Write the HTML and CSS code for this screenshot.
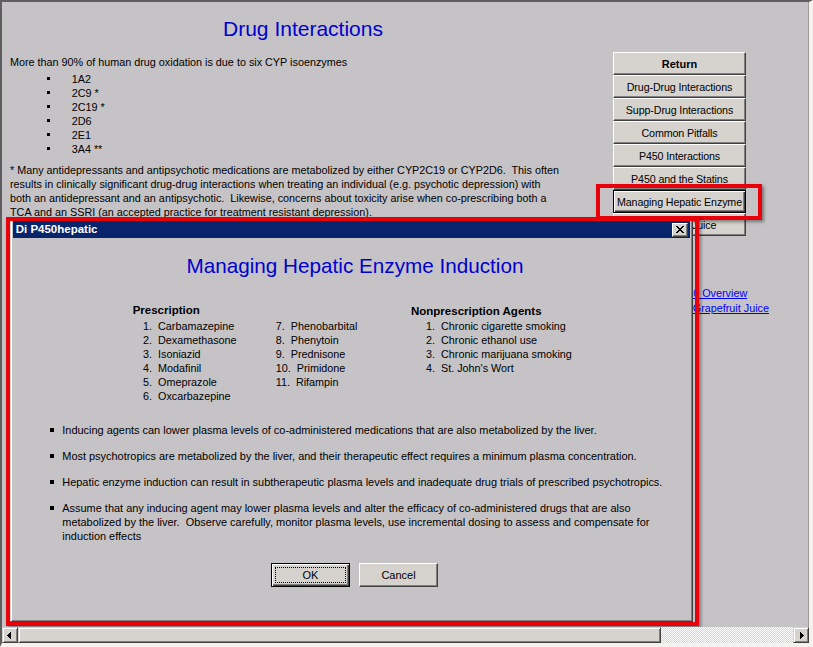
FILE: index.html
```html
<!DOCTYPE html>
<html lang="en">
<head>
<meta charset="utf-8">
<title>Drug Interactions</title>
<link rel="stylesheet" href="styles.css">
</head>
<body>
<div class="frame">
  <div class="view">
    <div class="page">
      <div class="main">
        <h1 class="title">Drug Interactions</h1>
        <p class="lead">More than 90% of human drug oxidation is due to six CYP isoenzymes</p>
        <ul class="cyp">
          <li>1A2</li>
          <li>2C9 *</li>
          <li>2C19 *</li>
          <li>2D6</li>
          <li>2E1</li>
          <li>3A4 **</li>
        </ul>
        <p class="note">* Many antidepressants and antipsychotic medications are metabolized by either CYP2C19 or CYP2D6.&nbsp; This often<br>results in clinically significant drug-drug interactions when treating an individual (e.g. psychotic depression) with<br>both an antidepressant and an antipsychotic.&nbsp; Likewise, concerns about toxicity arise when co-prescribing both a<br>TCA and an SSRI (an accepted practice for treatment resistant depression).</p>
      </div>
      <div class="side">
        <nav class="nav">
          <button class="btn btn-bold">Return</button>
          <button class="btn">Drug-Drug Interactions</button>
          <button class="btn">Supp-Drug Interactions</button>
          <button class="btn">Common Pitfalls</button>
          <button class="btn">P450 Interactions</button>
          <button class="btn">P450 and the Statins</button>
          <button class="btn btn-focus">Managing Hepatic Enzyme</button>
          <button class="btn">Grapefruit Juice</button>
        </nav>
        <div class="links">
          <a class="link link-1" href="#">P450 Overview</a>
          <a class="link link-2" href="#">P450 and Grapefruit Juice</a>
        </div>
      </div>
    </div>

    <div class="mark mark-btn"></div>

    <section class="dialog">
      <div class="titlebar">
        <span class="caption">Di P450hepatic</span>
        <span class="close"><svg width="8" height="7" viewBox="0 0 8 7" shape-rendering="crispEdges"><path d="M0 0h2v1h-2zM6 0h2v1h-2zM1 1h2v1h-2zM5 1h2v1h-2zM2 2h4v1h-4zM3 3h2v1h-2zM2 4h4v1h-4zM1 5h2v1h-2zM5 5h2v1h-2zM0 6h2v1h-2zM6 6h2v1h-2z" fill="#000"/></svg></span>
      </div>
      <h2 class="dlg-title">Managing Hepatic Enzyme Induction</h2>
      <div class="lists">
        <div class="group presc">
          <h3>Prescription</h3>
          <div class="cols">
            <ul class="col">
              <li><span class="n">1.</span>Carbamazepine</li>
              <li><span class="n">2.</span>Dexamethasone</li>
              <li><span class="n">3.</span>Isoniazid</li>
              <li><span class="n">4.</span>Modafinil</li>
              <li><span class="n">5.</span>Omeprazole</li>
              <li><span class="n">6.</span>Oxcarbazepine</li>
            </ul>
            <ul class="col">
              <li><span class="n">7.</span>Phenobarbital</li>
              <li><span class="n">8.</span>Phenytoin</li>
              <li><span class="n">9.</span>Prednisone</li>
              <li><span class="n">10.</span>Primidone</li>
              <li><span class="n">11.</span>Rifampin</li>
            </ul>
          </div>
        </div>
        <div class="group nonpresc">
          <h3>Nonprescription Agents</h3>
          <ul class="col">
            <li><span class="n">1.</span>Chronic cigarette smoking</li>
            <li><span class="n">2.</span>Chronic ethanol use</li>
            <li><span class="n">3.</span>Chronic marijuana smoking</li>
            <li><span class="n">4.</span>St. John's Wort</li>
          </ul>
        </div>
      </div>
      <ul class="points">
        <li>Inducing agents can lower plasma levels of co-administered medications that are also metabolized by the liver.</li>
        <li>Most psychotropics are metabolized by the liver, and their therapeutic effect requires a minimum plasma concentration.</li>
        <li>Hepatic enzyme induction can result in subtherapeutic plasma levels and inadequate drug trials of prescribed psychotropics.</li>
        <li><span>Assume that any inducing agent may lower plasma levels and alter the efficacy of co-administered drugs that are also<br>metabolized by the liver.&nbsp; Observe carefully, monitor plasma levels, use incremental dosing to assess and compensate for<br>induction effects</span></li>
      </ul>
      <div class="actions">
        <button class="dbtn dbtn-default">OK</button>
        <button class="dbtn">Cancel</button>
      </div>
    </section>

    <div class="mark mark-dlg"></div>
  </div>

  <div class="hscroll">
    <span class="sb-btn sb-left"><svg width="4" height="7" viewBox="0 0 4 7" shape-rendering="crispEdges"><path d="M3 0h1v7h-1zM2 1h1v5h-1zM1 2h1v3h-1zM0 3h1v1h-1z" fill="#000"/></svg></span>
    <span class="sb-thumb"></span>
    <span class="sb-track"></span>
    <span class="sb-btn sb-right"><svg width="4" height="7" viewBox="0 0 4 7" shape-rendering="crispEdges"><path d="M0 0h1v7h-1zM1 1h1v5h-1zM2 2h1v3h-1zM3 3h1v1h-1z" fill="#000"/></svg></span>
  </div>
</div>
</body>
</html>
```

FILE: styles.css
```css
* { box-sizing: border-box; }

html, body {
  margin: 0;
  padding: 0;
}

body {
  width: 813px;
  height: 647px;
  overflow: hidden;
  background: #f4f3f0;
  font-family: "Liberation Sans", Arial, sans-serif;
  font-size: 10.8px;
  color: #000;
}

.frame {
  width: 813px;
  height: 647px;
  display: flex;
  flex-direction: column;
  border-style: solid;
  border-width: 2px 4px 4px 2px;
  border-color: #5e5e5e #f4f3f0 #f4f3f0 #5e5e5e;
}

.view {
  position: relative;
  height: 625px;
  flex: none;
  background: #c6c3c6;
  overflow: hidden;
  box-shadow: inset -1px 0 0 #9c9c9c;
}

.page {
  display: flex;
  padding-left: 8px;
}

.main {
  width: 586px;
  flex: none;
}

.title {
  margin: 14.6px 0 0;
  font-size: 21px;
  line-height: 24px;
  font-weight: normal;
  color: #0000ce;
  text-align: center;
}

.lead {
  margin: 14.8px 0 0;
  line-height: 14px;
}

.cyp {
  list-style: none;
  margin: 3px 0 0;
  padding: 0 0 0 37px;
}

.cyp li {
  display: flex;
  line-height: 14px;
}

.cyp li::before {
  content: "";
  flex: none;
  width: 3px;
  height: 3px;
  background: #000;
  margin: 4.6px 21.7px 0 0;
}

.note {
  margin: 7px 0 0;
  line-height: 14px;
  white-space: nowrap;
}

.side {
  margin-left: 17px;
  padding-top: 50.3px;
  display: flex;
  flex-direction: column;
  align-items: flex-start;
}

.nav {
  display: flex;
  flex-direction: column;
  width: 133px;
}

.btn {
  display: block;
  width: 133px;
  height: 23px;
  margin: 0;
  padding: 0;
  font: inherit;
  font-size: 10.7px;
  letter-spacing: -0.12px;
  color: #000;
  text-align: center;
  background: #d6d3ce;
  border: 1px solid;
  border-color: #fff #404040 #404040 #fff;
  box-shadow: inset -1px -1px 0 #808080;
}

.btn-bold { font-weight: bold; font-size: 11px; letter-spacing: 0; }

.btn-focus {
  border-color: #000;
  box-shadow: inset 1px 1px 0 #fff, inset -1px -1px 0 #404040, inset -2px -2px 0 #808080;
}

.links {
  margin-top: 49.7px;
  display: flex;
  flex-direction: column;
  align-items: flex-start;
  line-height: 15px;
}

.link {
  color: #0000ff;
  text-decoration: underline;
}

.link-1 { margin-left: 61px; }
.link-2 { margin-left: 30.5px; }

.mark {
  position: absolute;
  border: 4px solid #e8000b;
  box-shadow: 2px 2px 3px rgba(0, 0, 0, 0.4);
}

.mark-btn {
  left: 594px;
  top: 182px;
  width: 166px;
  height: 36px;
}

.mark-dlg {
  left: 4px;
  top: 215px;
  width: 693px;
  height: 409px;
}

.dialog {
  position: absolute;
  left: 8px;
  top: 216px;
  width: 683px;
  height: 404px;
  background: #c6c3c6;
  border: 1px solid;
  border-color: #d6d3ce #404040 #404040 #d6d3ce;
  box-shadow: inset 1px 1px 0 #fff, inset -1px -1px 0 #808080;
  padding: 2px;
  display: flex;
  flex-direction: column;
}

.titlebar {
  height: 17px;
  flex: none;
  background: #08246b;
  color: #fff;
  display: flex;
  align-items: center;
  justify-content: space-between;
  padding: 0 2px 0 2.7px;
  font-weight: bold;
  font-size: 11.5px;
  line-height: 17px;
}

.close {
  width: 16px;
  height: 14px;
  background: #d6d3ce;
  border: 1px solid;
  border-color: #fff #404040 #404040 #fff;
  box-shadow: inset -1px -1px 0 #808080;
  display: flex;
  align-items: center;
  justify-content: center;
}

.dlg-title {
  margin: 16.4px 0 0;
  padding-left: 7px;
  font-size: 20.7px;
  line-height: 24px;
  font-weight: normal;
  color: #0000ce;
  text-align: center;
}

.lists {
  display: flex;
  margin-top: 24.8px;
  padding-left: 119.7px;
}

.group h3 {
  margin: 0;
  font-size: 11.5px;
  line-height: 14px;
  font-weight: bold;
}

.presc { width: 278.3px; flex: none; }
.presc h3 { margin-bottom: 2.2px; }
.nonpresc h3 { margin-top: 1px; margin-bottom: 1.2px; }

.cols {
  display: flex;
  padding-left: 10.3px;
}

.col {
  list-style: none;
  margin: 0;
  padding: 0;
  line-height: 14px;
}

.cols .col:first-child { width: 132.7px; flex: none; }

.nonpresc .col { padding-left: 15px; }

.n { margin-right: 6px; }

.points {
  list-style: none;
  margin: 19.3px 0 0;
  padding: 0 0 0 37px;
  font-size: 10.95px;
  line-height: 14px;
  white-space: nowrap;
}

.points li {
  display: flex;
  margin-bottom: 12px;
}

.points li::before {
  content: "";
  flex: none;
  width: 4px;
  height: 4px;
  background: #000;
  margin: 5px 8.3px 0 0;
}

.actions {
  display: flex;
  justify-content: center;
  gap: 9px;
  padding-left: 6px;
  margin-top: 8.6px;
}

.dbtn {
  position: relative;
  width: 79px;
  height: 24px;
  margin: 0;
  padding: 0;
  font: inherit;
  font-size: 11px;
  color: #000;
  background: #d6d3ce;
  border: 1px solid;
  border-color: #fff #404040 #404040 #fff;
  box-shadow: inset -1px -1px 0 #808080;
}

.dbtn-default {
  border-color: #000;
  box-shadow: inset 1px 1px 0 #fff, inset -1px -1px 0 #404040, inset -2px -2px 0 #808080;
}

.dbtn-default::after {
  content: "";
  position: absolute;
  inset: 3px;
  border: 1px dotted #000;
}

.hscroll {
  height: 16px;
  flex: none;
  display: flex;
  background: repeating-conic-gradient(#fff 0 25%, #d6d3ce 0 50%) 0 0 / 2px 2px;
}

.sb-btn,
.sb-thumb {
  height: 16px;
  flex: none;
  background: #d6d3ce;
  border: 1px solid;
  border-color: #d6d3ce #404040 #404040 #d6d3ce;
  box-shadow: inset 1px 1px 0 #fff, inset -1px -1px 0 #808080;
}

.sb-btn {
  width: 16px;
  display: flex;
  align-items: center;
  justify-content: center;
}

.sb-left svg { margin-left: -2px; }
.sb-right svg { margin-left: 1px; }

.sb-thumb { width: 643px; }

.sb-track { flex: 1; }
```
